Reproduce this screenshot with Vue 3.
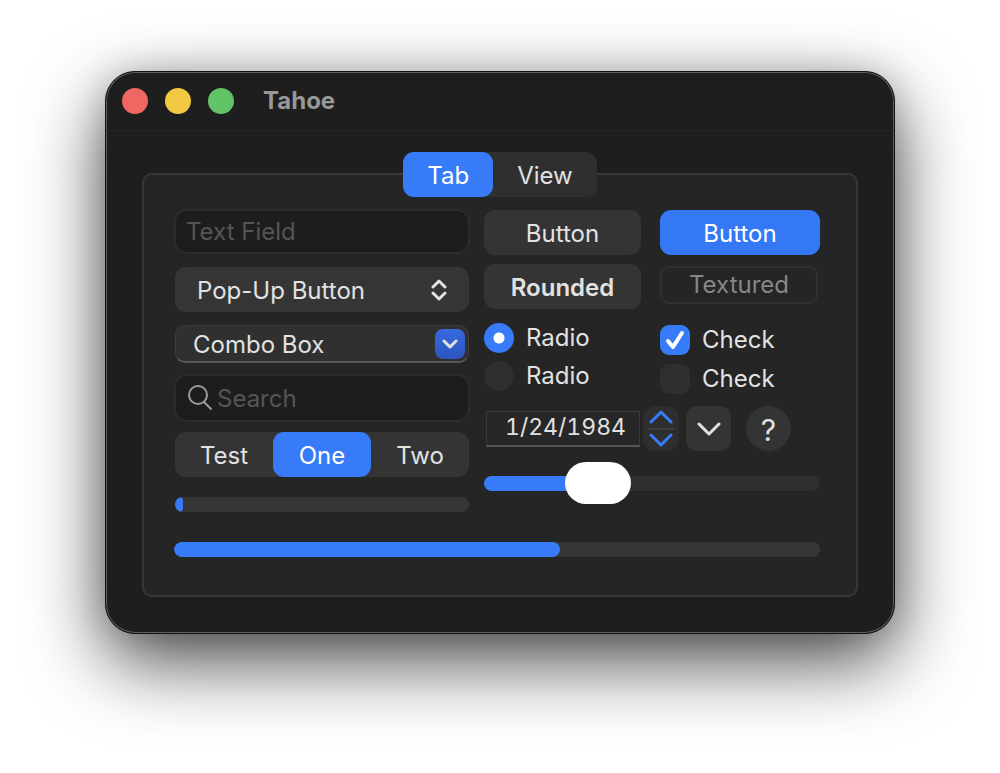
<script setup>
import { ref } from 'vue'

const tabs = ['Tab', 'View']
const activeTab = ref('Tab')

const segments = ['Test', 'One', 'Two']
const activeSegment = ref('One')

const text = ref('')
const search = ref('')
const popup = ref('Pop-Up Button')
const combo = ref('Combo Box')
const date = ref('1/24/1984')
const radio = ref('first')
const checks = ref(['first'])
const slider = ref(30)

const stepDay = (amount) => {
  const day = new Date(date.value)
  if (isNaN(day)) return
  day.setDate(day.getDate() + amount)
  date.value = `${day.getMonth() + 1}/${day.getDate()}/${day.getFullYear()}`
}
</script>

<template>
  <div class="desktop">
    <main class="window">
      <header class="titlebar">
        <button class="light close" aria-label="Close"></button>
        <button class="light minimize" aria-label="Minimize"></button>
        <button class="light maximize" aria-label="Zoom"></button>
        <h1>Tahoe</h1>
      </header>

      <div class="content">
        <div class="tabs" role="tablist">
          <button
            v-for="tab in tabs"
            :key="tab"
            role="tab"
            :aria-selected="activeTab === tab"
            :class="{ active: activeTab === tab }"
            @click="activeTab = tab"
          >{{ tab }}</button>
        </div>

        <section class="panel">
          <div class="columns">
            <div class="left">
              <input v-model="text" class="field" type="text" placeholder="Text Field" aria-label="Text Field" />

              <div class="popup">
                <select v-model="popup" aria-label="Pop-Up Button">
                  <option>Pop-Up Button</option>
                </select>
                <svg width="16" height="22" viewBox="0 0 16 22">
                  <path d="M2 8 L8 2 L14 8 M2 14 L8 20 L14 14" />
                </svg>
              </div>

              <div class="combo">
                <input v-model="combo" type="text" aria-label="Combo Box" />
                <button aria-label="Show options">
                  <svg width="16" height="10" viewBox="0 0 16 10">
                    <path d="M2 2 L8 8 L14 2" />
                  </svg>
                </button>
              </div>

              <div class="search">
                <svg width="26" height="26" viewBox="0 0 26 26">
                  <circle cx="10" cy="10" r="9" />
                  <path d="M16 17 L23 24" />
                </svg>
                <input v-model="search" type="text" placeholder="Search" aria-label="Search" />
              </div>

              <div class="segmented">
                <button
                  v-for="segment in segments"
                  :key="segment"
                  :class="{ active: activeSegment === segment }"
                  :aria-pressed="activeSegment === segment"
                  @click="activeSegment = segment"
                >{{ segment }}</button>
              </div>

              <progress class="small" value="2.7" max="100" aria-label="Step progress"></progress>
            </div>

            <div class="right">
              <div class="pair">
                <div class="stack">
                  <button class="push">Button</button>
                  <button class="push rounded">Rounded</button>
                  <div class="options">
                    <label><input v-model="radio" type="radio" name="radio" value="first" />Radio</label>
                    <label><input v-model="radio" type="radio" name="radio" value="second" />Radio</label>
                  </div>
                </div>
                <div class="stack">
                  <button class="push primary">Button</button>
                  <button class="textured" disabled>Textured</button>
                  <div class="options checks">
                    <label>
                      <span class="box">
                        <input v-model="checks" type="checkbox" value="first" />
                        <svg width="20" height="20" viewBox="0 0 20 20"><path d="M3 11 L8 17 L17 3" /></svg>
                      </span>Check
                    </label>
                    <label>
                      <span class="box">
                        <input v-model="checks" type="checkbox" value="second" />
                        <svg width="20" height="20" viewBox="0 0 20 20"><path d="M3 11 L8 17 L17 3" /></svg>
                      </span>Check
                    </label>
                  </div>
                </div>
              </div>

              <div class="date-row">
                <input v-model="date" class="date" type="text" aria-label="Date" />
                <div class="stepper">
                  <button aria-label="Next day" @click="stepDay(1)">
                    <svg width="24" height="14" viewBox="0 0 24 14"><path d="M2 12 L12 2 L22 12" /></svg>
                  </button>
                  <button aria-label="Previous day" @click="stepDay(-1)">
                    <svg width="24" height="14" viewBox="0 0 24 14"><path d="M2 2 L12 12 L22 2" /></svg>
                  </button>
                </div>
                <button class="pulldown" aria-label="Disclose">
                  <svg width="24" height="14" viewBox="0 0 24 14"><path d="M2 2 L12 12 L22 2" /></svg>
                </button>
                <button class="help">?</button>
              </div>

              <input
                v-model="slider"
                class="slider"
                type="range"
                min="0"
                max="100"
                aria-label="Slider"
                :style="{ '--fill': slider + '%' }"
              />
            </div>
          </div>

          <progress class="large" value="59.7" max="100" aria-label="Total progress"></progress>
        </section>
      </div>
    </main>
  </div>
</template>

<style>
body {
  background: #fff;
}
</style>

<style scoped>
* {
  box-sizing: border-box;
}
.desktop {
  min-height: 100vh;
  padding: 71px 105px;
}
.window {
  color: #e2e2e2;
  font-family: Inter, "Liberation Sans", sans-serif;
  font-size: 24px;
  line-height: 30px;
  background: #1e1e1e;
  border: 1px solid #111;
  border-radius: 30px;
  box-shadow: inset 0 0 0 1px #606060, 0 27px 76px rgba(0, 0, 0, 0.72), 0 0 32px rgba(0, 0, 0, 0.14);
}
button,
input,
select {
  min-width: 0;
  margin: 0;
  padding: 0;
  color: inherit;
  font: inherit;
  background: none;
  border: 0;
  outline: none;
  appearance: none;
}
svg {
  display: block;
  fill: none;
  stroke: #e2e2e2;
  stroke-width: 3;
  stroke-linecap: round;
  stroke-linejoin: round;
}

.titlebar {
  display: flex;
  align-items: center;
  gap: 17px;
  height: 59px;
  padding: 0 16px;
  border-bottom: 1px solid #252525;
}
.light {
  width: 26px;
  height: 26px;
  border-radius: 50%;
}
.close {
  background: #ee6762;
}
.minimize {
  background: #f3c944;
}
.maximize {
  background: #62c466;
}
h1 {
  margin: 0 0 0 12px;
  color: #989898;
  font-size: 24px;
  font-weight: 700;
}

.content {
  padding: 21px 36px 36px;
}
.tabs {
  position: relative;
  display: flex;
  width: fit-content;
  margin: 0 auto -24px;
  background: #2f2f2f;
  border-radius: 11px;
}
.tabs button {
  height: 45px;
  padding: 2px 24px 0;
  border-radius: 11px;
}
.active {
  color: #fff;
  background: #387bf9;
}
.panel {
  padding: 34px 36px 38px 30px;
  background: #252525;
  border: 2px solid #373737;
  border-radius: 10px;
}
.columns {
  display: grid;
  grid-template-columns: minmax(0, 296fr) minmax(0, 336fr);
  gap: 14px;
}

.left {
  display: flex;
  flex-direction: column;
}
.field,
.search {
  background: #1d1d1d;
  border: 2px solid #2c2c2c;
  border-radius: 13px;
}
.field {
  height: 45px;
  padding: 0 10px;
}
::placeholder {
  color: #555;
  opacity: 1;
}
.popup {
  position: relative;
  margin: 13px 1px 0;
}
.popup select {
  display: block;
  width: 100%;
  height: 45px;
  padding: 2px 22px 0;
  background: #353535;
  border-radius: 11px;
}
.popup svg {
  position: absolute;
  top: 12px;
  right: 22px;
  pointer-events: none;
}
.combo {
  display: flex;
  align-items: center;
  height: 38px;
  margin: 13px 1px 0;
  padding: 0 3px 0 17px;
  background: #303030;
  border: 1px solid #3c3c3c;
  border-bottom: 2px solid #585858;
  border-radius: 10px;
}
.combo input,
.search input {
  flex: 1;
  padding-top: 2px;
}
.combo button {
  display: grid;
  place-items: center;
  width: 30px;
  height: 30px;
  background: linear-gradient(#3769e0, #2c56bd);
  border-radius: 8px;
}
.search {
  display: flex;
  align-items: center;
  gap: 3px;
  height: 48px;
  margin-top: 11px;
  padding: 0 12px;
}
.search svg {
  stroke: #9b9b9b;
  stroke-width: 2;
}
.segmented {
  display: grid;
  grid-template-columns: repeat(3, 1fr);
  margin: 10px 1px 0;
  background: #343434;
  border-radius: 11px;
}
.segmented button {
  height: 45px;
  padding-top: 2px;
  border-radius: 11px;
}

progress {
  display: block;
  width: 100%;
  height: 15px;
  overflow: hidden;
  background: #343434;
  border: 0;
  border-radius: 8px;
  appearance: none;
}
progress::-webkit-progress-bar {
  background: #363636;
  border-radius: 8px;
}
progress::-webkit-progress-value {
  background: #387bf9;
  border-radius: 8px;
}
.small {
  width: auto;
  margin: 20px 1px 0;
}
.large {
  margin-top: 30px;
}

.pair {
  display: grid;
  grid-template-columns: minmax(0, 157fr) minmax(0, 160fr);
  gap: 19px;
  padding-top: 1px;
}
.stack {
  display: flex;
  flex-direction: column;
}
.push {
  height: 45px;
  padding-top: 2px;
  background: #343434;
  border-radius: 11px;
}
.primary {
  color: #fff;
  background: #3478f6;
}
.rounded {
  margin-top: 9px;
  font-weight: 600;
}
.textured {
  height: 38px;
  margin: 11px 2px 0 0;
  color: #878787;
  border: 2px solid #303030;
  border-radius: 9px;
}
.options {
  display: flex;
  flex-direction: column;
  gap: 8px;
  margin-top: 14px;
}
.options label {
  display: flex;
  align-items: center;
  gap: 12px;
}
.options input {
  flex: none;
  width: 30px;
  height: 30px;
  background: #2f2f2f;
  border-radius: 9px;
}
.options input[type="radio"] {
  border-radius: 50%;
}
.options input:checked {
  background: #387bf9;
}
.options input[type="radio"]:checked {
  background: radial-gradient(circle, #fff 5px, #387bf9 6px);
}
.checks {
  gap: 9px;
  margin-top: 21px;
}
.box {
  display: grid;
  place-items: center;
}
.box > * {
  grid-area: 1 / 1;
}
.box svg {
  z-index: 1;
  visibility: hidden;
  stroke: #fff;
  stroke-width: 4;
  pointer-events: none;
}
.box input:checked + svg {
  visibility: visible;
}

.date-row {
  display: flex;
  align-items: center;
  height: 45px;
  margin-top: 12px;
  padding: 0 29px 0 2px;
}
.date {
  flex: 1;
  height: 36px;
  padding: 0 0 2px 18px;
  font-size: 23px;
  font-variant-numeric: tabular-nums;
  background: #272727;
  border: 1px solid #3b3b3b;
  border-bottom: 2px solid #565656;
}
.stepper {
  width: 36px;
  height: 45px;
  margin: 0 7px 0 3px;
  padding: 0 5px;
  background: #2e2e2e;
  border-radius: 12px;
}
.stepper button {
  display: grid;
  place-items: center;
  width: 26px;
  height: 22px;
}
.stepper button + button {
  border-top: 2px solid #404040;
}
.stepper svg {
  stroke: #387bf9;
}
.pulldown,
.help {
  display: grid;
  place-items: center;
  width: 45px;
  height: 45px;
  background: #343434;
  border-radius: 11px;
}
.help {
  margin-left: 15px;
  padding-top: 2px;
  font-size: 30px;
  border-radius: 50%;
}
.slider {
  display: block;
  width: 100%;
  height: 42px;
  margin-top: 11px;
}
.slider::-webkit-slider-runnable-track {
  height: 15px;
  background: linear-gradient(to right, #387bf9 var(--fill), #2f2f2f var(--fill));
  border-radius: 8px;
}
.slider::-webkit-slider-thumb {
  width: 66px;
  height: 42px;
  margin-top: -14px;
  background: #fff;
  border-radius: 21px;
  appearance: none;
}
</style>
